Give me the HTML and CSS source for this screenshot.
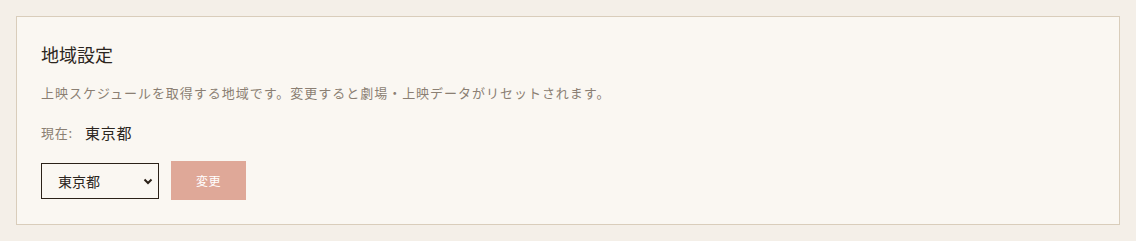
FILE: index.html
```html
<!DOCTYPE html>
<html lang="ja">
<head>
  <meta charset="UTF-8">
  <meta name="viewport" content="width=device-width, initial-scale=1.0">
  <title>地域設定</title>
  <link rel="stylesheet" href="styles.css">
</head>
<body>
  <section class="card">
    <h2 class="card-title">地域設定</h2>
    <p class="card-desc">上映スケジュールを取得する地域です。変更すると劇場・上映データがリセットされます。</p>
    <div class="current">
      <span class="current-label">現在:</span>
      <span class="current-value">東京都</span>
    </div>
    <div class="controls">
      <span class="select-wrap">
        <select class="region-select">
          <option>東京都</option>
          <option>大阪府</option>
          <option>愛知県</option>
        </select>
        <svg class="chevron" width="10" height="7" viewBox="0 0 10 7">
          <path d="M1.5 1.5 L5 5 L8.5 1.5" fill="none" stroke="#2b2118" stroke-width="2"/>
        </svg>
      </span>
      <button class="change-btn" disabled>変更</button>
    </div>
  </section>
</body>
</html>
```

FILE: styles.css
```css
body {
  margin: 0;
  padding: 16px;
  background-color: #f4efe8;
  font-family: 'Noto Sans CJK JP', 'Noto Sans', sans-serif;
}

.card {
  border: 1px solid #d9cdbb;
  background-color: #faf7f2;
  padding: 24px;
}

.card-title {
  margin: 2px 0 14px;
  font-family: 'Liberation Serif', 'Noto Sans CJK JP', serif;
  font-size: 18px;
  font-weight: normal;
  line-height: 26px;
  color: #2b2520;
}

.card-desc {
  margin: 0 0 19px;
  font-size: 13px;
  letter-spacing: 0.075em;
  line-height: 20px;
  color: #8b7f73;
}

.current {
  display: flex;
  align-items: center;
  gap: 12px;
  line-height: 22px;
  margin-bottom: 17px;
  letter-spacing: 0.05em;
}

.current-label {
  font-size: 13px;
  color: #8b7f73;
}

.current-value {
  font-size: 15px;
  color: #2b2520;
}

.controls {
  display: flex;
  align-items: center;
  gap: 12px;
}

.select-wrap {
  position: relative;
  display: inline-block;
}

.region-select {
  appearance: none;
  -webkit-appearance: none;
  width: 118px;
  height: 36px;
  margin: 0;
  padding: 0 0 0 16px;
  border: 1px solid #2b2118;
  border-radius: 0;
  background-color: transparent;
  font-family: 'Noto Sans CJK JP', sans-serif;
  font-size: 14px;
  color: #2b2520;
}

.chevron {
  position: absolute;
  right: 6px;
  top: 15px;
  pointer-events: none;
}

.change-btn {
  width: 75px;
  height: 39px;
  border: none;
  border-radius: 0;
  background-color: #dfa898;
  color: #fff;
  font-family: 'Noto Sans CJK JP', sans-serif;
  font-size: 12px;
  letter-spacing: 0.05em;
  padding: 0;
}
```
